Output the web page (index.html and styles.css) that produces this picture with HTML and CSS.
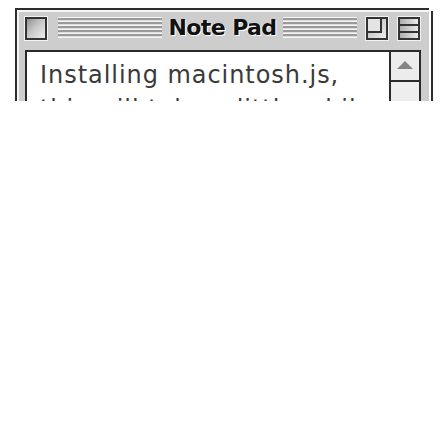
FILE: index.html
```html
<!DOCTYPE html>
<html>
<head>
<meta charset="utf-8">
<link rel="stylesheet" href="styles.css">
</head>
<body>
<div class="clip">
  <div class="window">
    <div class="titlebar">
      <svg class="box close" width="22" height="23" viewBox="0 0 22 23">
        <defs>
          <linearGradient id="gc" x1="0" y1="0" x2="1" y2="1">
            <stop offset="0" stop-color="#8a8a8a"/>
            <stop offset="0.45" stop-color="#c6c6c6"/>
            <stop offset="1" stop-color="#f0f0f0"/>
          </linearGradient>
        </defs>
        <rect x="1" y="1" width="20" height="21" fill="url(#gc)" stroke="#333" stroke-width="2"/>
      </svg>
      <div class="stripes left"></div>
      <div class="title">Note Pad</div>
      <div class="stripes right"></div>
      <svg class="box zoom" width="22" height="23" viewBox="0 0 22 23">
        <defs>
          <linearGradient id="gz" x1="0" y1="0" x2="1" y2="1">
            <stop offset="0" stop-color="#a0a0a0"/>
            <stop offset="0.5" stop-color="#d2d2d2"/>
            <stop offset="1" stop-color="#f0f0f0"/>
          </linearGradient>
        </defs>
        <rect x="1" y="1" width="20" height="21" fill="url(#gz)" stroke="#333" stroke-width="2"/>
        <rect x="2" y="2" width="12" height="12" fill="#e4e4e4"/>
        <path d="M15 2 V15 H2" fill="none" stroke="#333" stroke-width="2"/>
      </svg>
      <svg class="box collapse" width="22" height="23" viewBox="0 0 22 23">
        <defs>
          <linearGradient id="gl" x1="0" y1="0" x2="1" y2="0">
            <stop offset="0" stop-color="#aaaaaa"/>
            <stop offset="1" stop-color="#eeeeee"/>
          </linearGradient>
        </defs>
        <rect x="1" y="1" width="20" height="21" fill="url(#gl)" stroke="#333" stroke-width="2"/>
        <path d="M2 8 H20 M2 15 H20" stroke="#333" stroke-width="2"/>
      </svg>
    </div>
    <div class="frame">
      <div class="textarea">
        <div class="text">Installing macintosh.js,<br>this will take a little while.</div>
        <div class="scrollbar">
          <svg class="arrow-up" width="28" height="30" viewBox="0 0 28 30">
            <rect x="0" y="0" width="28" height="28" fill="#ececec"/>
            <polygon points="6,17 22,17 14,9" fill="#858585"/>
            <rect x="0" y="28" width="28" height="2" fill="#2a2a2a"/>
          </svg>
          <div class="track"></div>
        </div>
      </div>
    </div>
  </div>
</div>
</body>
</html>
```

FILE: styles.css
```css
html, body {
  margin: 0;
  padding: 0;
  background: #ffffff;
}
body {
  padding: 8px 0 0 15px;
}
.clip {
  width: 420px;
  height: 93px;
  overflow: hidden;
}
.window {
  width: 412px;
  height: 200px;
  border-top: 2px solid #2e2e2e;
  border-left: 2px solid #2e2e2e;
  background: #cdcdcd;
  box-shadow: inset 2px 2px 0 #f6f6f6, 2px 0 0 #fff, 4px 3px 0 #2e2e2e;
  font-family: "DejaVu Sans", sans-serif;
}
.titlebar {
  display: flex;
  align-items: flex-start;
  height: 36px;
  padding: 7px 0 0 8px;
  box-sizing: border-box;
}
.box {
  flex: none;
  display: block;
  box-shadow: 0 0 0 1px #f2f2f2;
}
.stripes {
  flex: none;
  height: 21px;
  background: repeating-linear-gradient(to bottom, #f4f4f4 0 1px, #9a9a9a 1px 3px, #dedede 3px 4px);
}
.stripes.left {
  width: 104px;
  margin-left: 11px;
}
.stripes.right {
  width: 74px;
}
.title {
  flex: none;
  width: 121px;
  text-align: center;
  font-weight: bold;
  font-size: 22px;
  letter-spacing: -0.6px;
  line-height: 24px;
  color: #111;
  text-shadow: 1px 1px 0 #fff, -1px 0 0 #e8e8e8;
  margin-top: -1px;
}
.zoom {
  margin-left: 9px;
}
.collapse {
  margin-left: 10px;
}
.frame {
  padding: 4px 8px 0 8px;
}
.textarea {
  display: flex;
  border: 2px solid #2a2a2a;
  background: #fff;
  height: 160px;
}
.text {
  flex: 1;
  min-width: 0;
  padding: 6px 0 0 13px;
  font-family: "DejaVu Sans", sans-serif;
  font-size: 24px;
  letter-spacing: 0.95px;
  line-height: 34px;
  color: #3a3a3a;
  white-space: nowrap;
  overflow: hidden;
}
.scrollbar {
  flex: none;
  width: 28px;
  border-left: 2px solid #2a2a2a;
  background: #eeeeee;
  display: flex;
  flex-direction: column;
}
.arrow-up {
  flex: none;
  display: block;
}
.track {
  flex: 1;
  background: #eeeeee;
}
```
